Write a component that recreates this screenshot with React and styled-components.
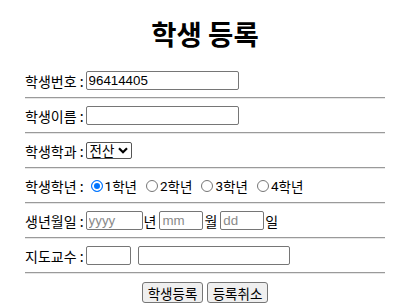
import React from "react";
import styled, { createGlobalStyle } from "styled-components";

const GlobalStyle = createGlobalStyle`
  body {
    margin: 0;
    background: #fff;
    color: #000;
    font-family: "Noto Sans CJK KR", "Noto Sans", sans-serif;
  }
`;

const Page = styled.div`
  width: 360px;
  padding-left: 25px;
`;

const Title = styled.h1`
  margin: 18px 0 23px;
  font-size: 27.5px;
  line-height: 30px;
  font-weight: 700;
  text-align: center;
`;

const Row = styled.div`
  display: flex;
  align-items: center;
  height: 19px;
  font-size: 14px;
  white-space: nowrap;
`;

const Label = styled.span`
  margin-right: 2px;
`;

const Line = styled.hr`
  margin: 7px 0;
  height: 0;
  border: 0;
  border-top: 1px solid #9a9a9a;
  border-bottom: 1px solid #e6e6e6;
`;

const TextInput = styled.input`
  box-sizing: border-box;
  width: ${(p) => p.$w || 153}px;
  height: 19px;
  margin: 0 ${(p) => p.$gap || 0}px 0 0;
  padding: 1px 2px;
  border: 1px solid #767676;
  border-radius: 2px;
  font-family: "Liberation Sans", Arial, sans-serif;
  font-size: 13.33px;
  color: #000;
  &::placeholder {
    color: #8a8a8a;
  }
`;

const Unit = styled.span`
  padding: 0 3px 0 1px;
`;

const SelectBox = styled.span`
  position: relative;
  display: inline-flex;
`;

const Select = styled.select`
  appearance: none;
  box-sizing: border-box;
  width: 46px;
  height: 17px;
  margin: 0;
  padding: 0 0 0 3px;
  border: 1px solid #555;
  border-radius: 2px;
  background: #fff;
  font-family: "Noto Sans CJK KR", sans-serif;
  font-size: 13.5px;
  line-height: 15px;
  color: #000;
`;

const Chevron = styled.svg`
  position: absolute;
  right: 4px;
  top: 5px;
  pointer-events: none;
`;

const Option = styled.label`
  display: inline-flex;
  align-items: center;
  margin-right: 4px;
  font-size: 13.5px;
`;

const Radio = styled.input`
  appearance: none;
  box-sizing: border-box;
  width: 12px;
  height: 12px;
  margin: 0 2px 0 5px;
  border: 1px solid #767676;
  border-radius: 50%;
  background: #fff;
  &:checked {
    border-color: #0075ff;
    background: #0075ff;
    box-shadow: inset 0 0 0 2px #fff;
  }
`;

const Num = styled.span`
  font-family: "Roboto", "Noto Sans CJK KR", sans-serif;
`;

const Buttons = styled.div`
  display: flex;
  justify-content: center;
  gap: 4px;
  margin-top: 8px;
`;

const Button = styled.button`
  box-sizing: border-box;
  width: 61px;
  height: 21px;
  padding: 0;
  border: 1px solid #767676;
  border-radius: 3px;
  background: #efefef;
  font-family: "Noto Sans CJK KR", sans-serif;
  font-size: 13.5px;
  color: #000;
`;

const grades = ["1", "2", "3", "4"];

export default function App() {
  return (
    <Page>
      <GlobalStyle />
      <Title>학생 등록</Title>
      <form>
        <Row>
          <Label>학생번호 :</Label>
          <TextInput defaultValue="96414405" />
        </Row>
        <Line />
        <Row>
          <Label>학생이름 :</Label>
          <TextInput />
        </Row>
        <Line />
        <Row>
          <Label>학생학과 :</Label>
          <SelectBox>
            <Select defaultValue="전산">
              <option>전산</option>
              <option>전자</option>
            </Select>
            <Chevron width="10" height="7" viewBox="0 0 10 7">
              <path d="M1 1.2 L5 5.2 L9 1.2" fill="none" stroke="#000" strokeWidth="2.2" />
            </Chevron>
          </SelectBox>
        </Row>
        <Line />
        <Row>
          <Label>학생학년 :</Label>
          {grades.map((g) => (
            <Option key={g}>
              <Radio type="radio" name="grade" defaultChecked={g === "1"} />
              <Num>{g}</Num>학년
            </Option>
          ))}
        </Row>
        <Line />
        <Row>
          <Label>생년월일 :</Label>
          <TextInput $w={57} placeholder="yyyy" />
          <Unit>년</Unit>
          <TextInput $w={44} placeholder="mm" />
          <Unit>월</Unit>
          <TextInput $w={44} placeholder="dd" />
          <Unit>일</Unit>
        </Row>
        <Line />
        <Row>
          <Label>지도교수 :</Label>
          <TextInput $w={45} $gap={7} />
          <TextInput $w={152} />
        </Row>
        <Line />
        <Buttons>
          <Button type="button">학생등록</Button>
          <Button type="button">등록취소</Button>
        </Buttons>
      </form>
    </Page>
  );
}
